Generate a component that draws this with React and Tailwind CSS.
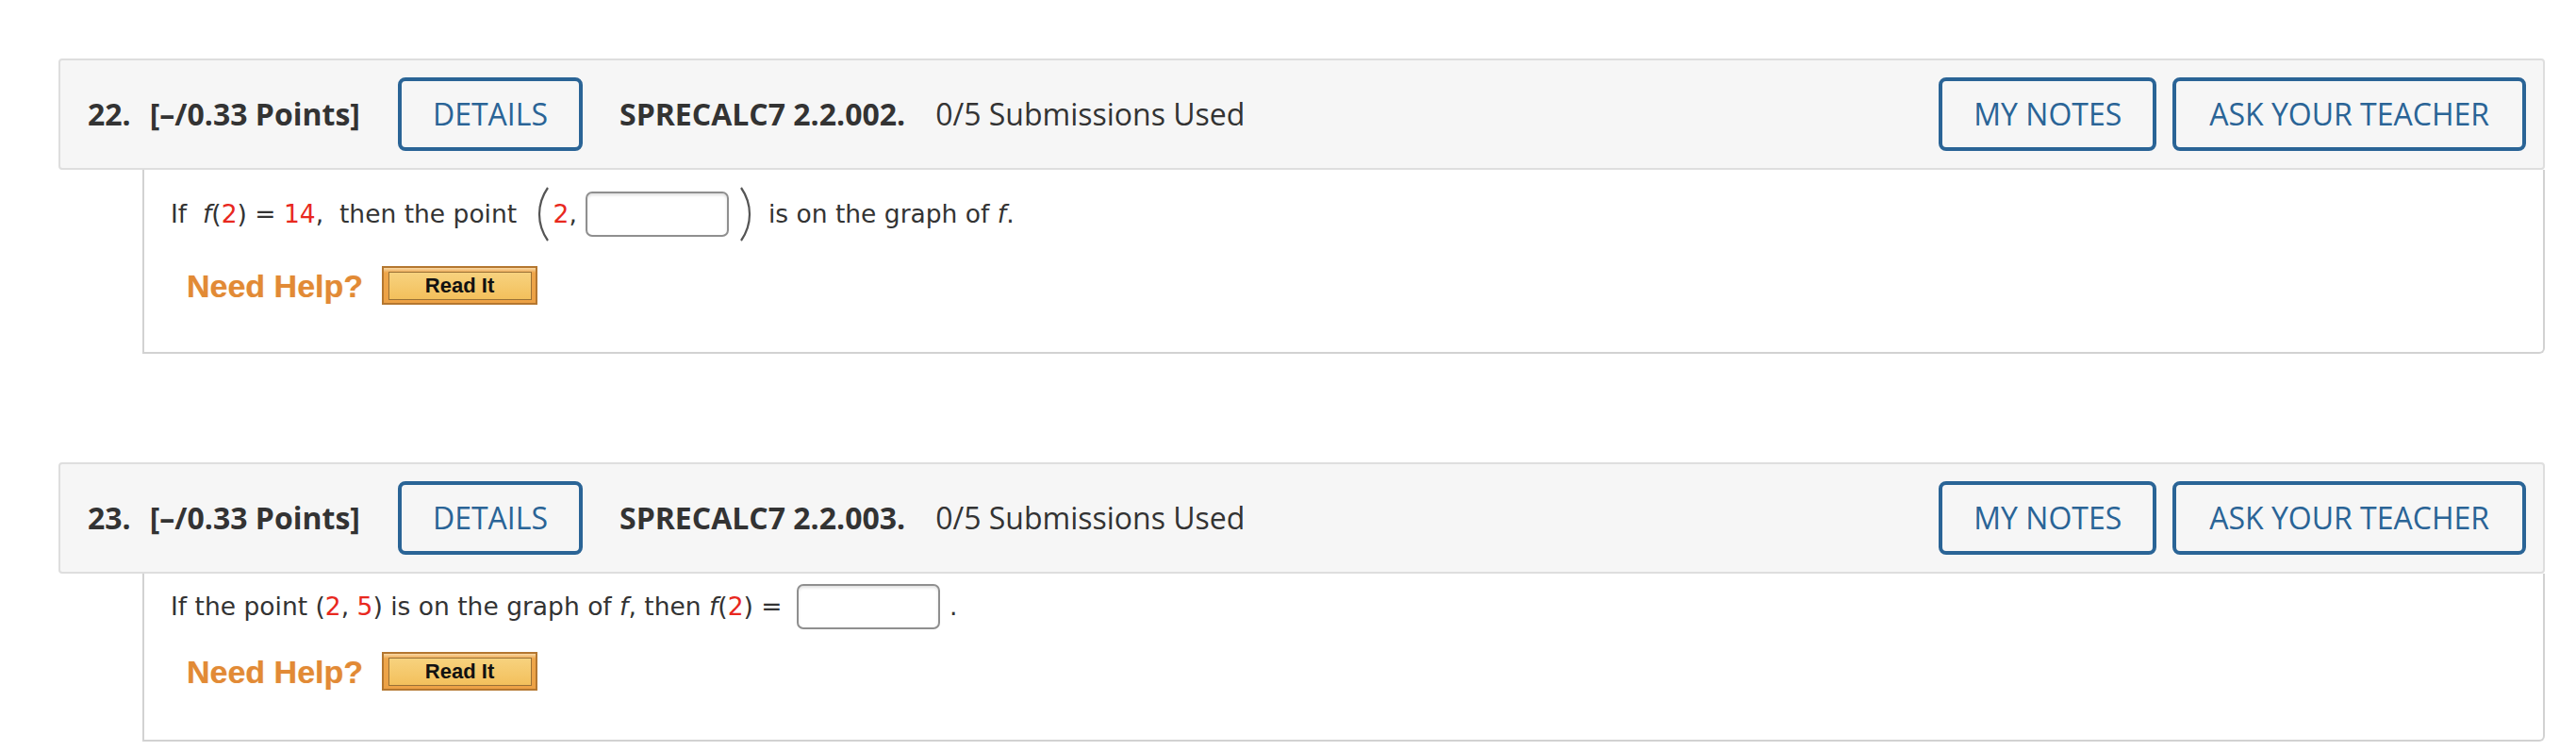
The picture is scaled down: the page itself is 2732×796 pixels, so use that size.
import React from "react";

const HDR = "'Open Sans', 'Noto Sans', sans-serif";
const Q = "'DejaVu Sans', Verdana, sans-serif";

function OutlineBtn({ children, px = "px-[33px]" }) {
  return (
    <div className={`flex items-center justify-center h-[78px] ${px} border-[4px] border-[#2a6496] rounded-[8px] text-[#2a6496] text-[32px] leading-none whitespace-nowrap`}>
      {children}
    </div>
  );
}

function Header({ num, code }) {
  return (
    <div
      className="flex items-center h-[118px] border-2 border-[#dedede] rounded-[4px] bg-[#f6f6f6] pl-[29px] pr-[18px] text-[#333] text-[32px] leading-none"
      style={{ fontFamily: HDR }}
    >
      <span className="font-bold">{num}.</span>
      <span className="font-bold ml-[20px]">[–/0.33 Points]</span>
      <div className="ml-[40px]">
        <OutlineBtn>DETAILS</OutlineBtn>
      </div>
      <span className="font-bold ml-[39px]">{code}</span>
      <span className="ml-[32px]">0/5 Submissions Used</span>
      <div className="flex-1" />
      <OutlineBtn>MY NOTES</OutlineBtn>
      <div className="ml-[17px]">
        <OutlineBtn px="px-[35px]">ASK YOUR TEACHER</OutlineBtn>
      </div>
    </div>
  );
}

function Input() {
  return (
    <div className="w-[152px] h-[48px] border-2 border-[#8f8f8f] rounded-[7px] bg-white shadow-[inset_0_2px_3px_rgba(0,0,0,0.12)]" />
  );
}

function ReadIt() {
  return (
    <div className="w-[165px] h-[41px] border-2 border-[#b47730] bg-[linear-gradient(#f9d9a6_0px,#eea64b_5px,#eca145_100%)] flex items-center justify-center">
      <div
        className="w-[152px] h-[30px] border border-[#9a7136] bg-[linear-gradient(#f7d27e,#f3c05c)] flex items-center justify-center text-[22px] font-bold text-[#111] leading-none"
        style={{ fontFamily: "'Liberation Sans', Arial, sans-serif" }}
      >
        Read It
      </div>
    </div>
  );
}

function Help({ mt }) {
  return (
    <div className={`flex items-center ${mt}`}>
      <span
        className="ml-[17px] text-[34px] font-bold text-[#e28a35] leading-none"
        style={{ fontFamily: "'Liberation Sans', Arial, sans-serif", textShadow: "0 0 1px rgba(227,137,47,0.5)" }}
      >
        Need Help?
      </span>
      <div className="ml-[20px]">
        <ReadIt />
      </div>
    </div>
  );
}

function Paren({ right }) {
  return (
    <svg width="14" height="58" viewBox="0 0 14 58" className="shrink-0">
      {right ? (
        <path d="M3 1 Q12 14 12 29 Q12 44 3 57" fill="none" stroke="#555" strokeWidth="2.2" />
      ) : (
        <path d="M11 1 Q2 14 2 29 Q2 44 11 57" fill="none" stroke="#555" strokeWidth="2.2" />
      )}
    </svg>
  );
}

const R = "text-[#e8281e]";

export default function App() {
  return (
    <div className="w-[2732px] h-[796px] bg-white pt-[62px] pl-[62px] pr-[33px]">
      <Header num="22" code="SPRECALC7 2.2.002." />
      <div className="ml-[89px] h-[195px] border-x-2 border-b-2 border-[#d2d2d2] rounded-br-[6px] pl-[28px] pt-[16px]" style={{ fontFamily: Q }}>
        <div className="flex items-center h-[62px] text-[26.5px] text-[#333] whitespace-pre">
          <span>If  </span>
          <span className="italic">f</span>
          <span>(</span>
          <span className={R}>2</span>
          <span>) = </span>
          <span className={R}>14</span>
          <span>,  then the point </span>
          <div className="ml-[13px] flex items-center">
            <Paren />
            <span className={`${R} ml-[3px]`}>2</span>
            <span>,</span>
            <div className="ml-[9px]">
              <Input />
            </div>
            <div className="ml-[10px]">
              <Paren right />
            </div>
          </div>
          <span className="ml-[18px]">is on the graph of </span>
          <span className="italic">f</span>
          <span>.</span>
        </div>
        <Help mt="mt-[24px]" />
      </div>

      <div className="mt-[115px]">
        <Header num="23" code="SPRECALC7 2.2.003." />
      </div>
      <div className="ml-[89px] h-[178px] border-x-2 border-b-2 border-[#d2d2d2] rounded-br-[6px] pl-[28px] pt-[10px]" style={{ fontFamily: Q }}>
        <div className="flex items-center h-[50px] text-[26.5px] text-[#333] whitespace-pre">
          <span>If the point (</span>
          <span className={R}>2</span>
          <span>, </span>
          <span className={R}>5</span>
          <span>) is on the graph of </span>
          <span className="italic">f</span>
          <span>, then </span>
          <span className="italic">f</span>
          <span>(</span>
          <span className={R}>2</span>
          <span>) = </span>
          <div className="ml-[7px]">
            <Input />
          </div>
          <span className="ml-[10px]">.</span>
        </div>
        <Help mt="mt-[23px]" />
      </div>
    </div>
  );
}
